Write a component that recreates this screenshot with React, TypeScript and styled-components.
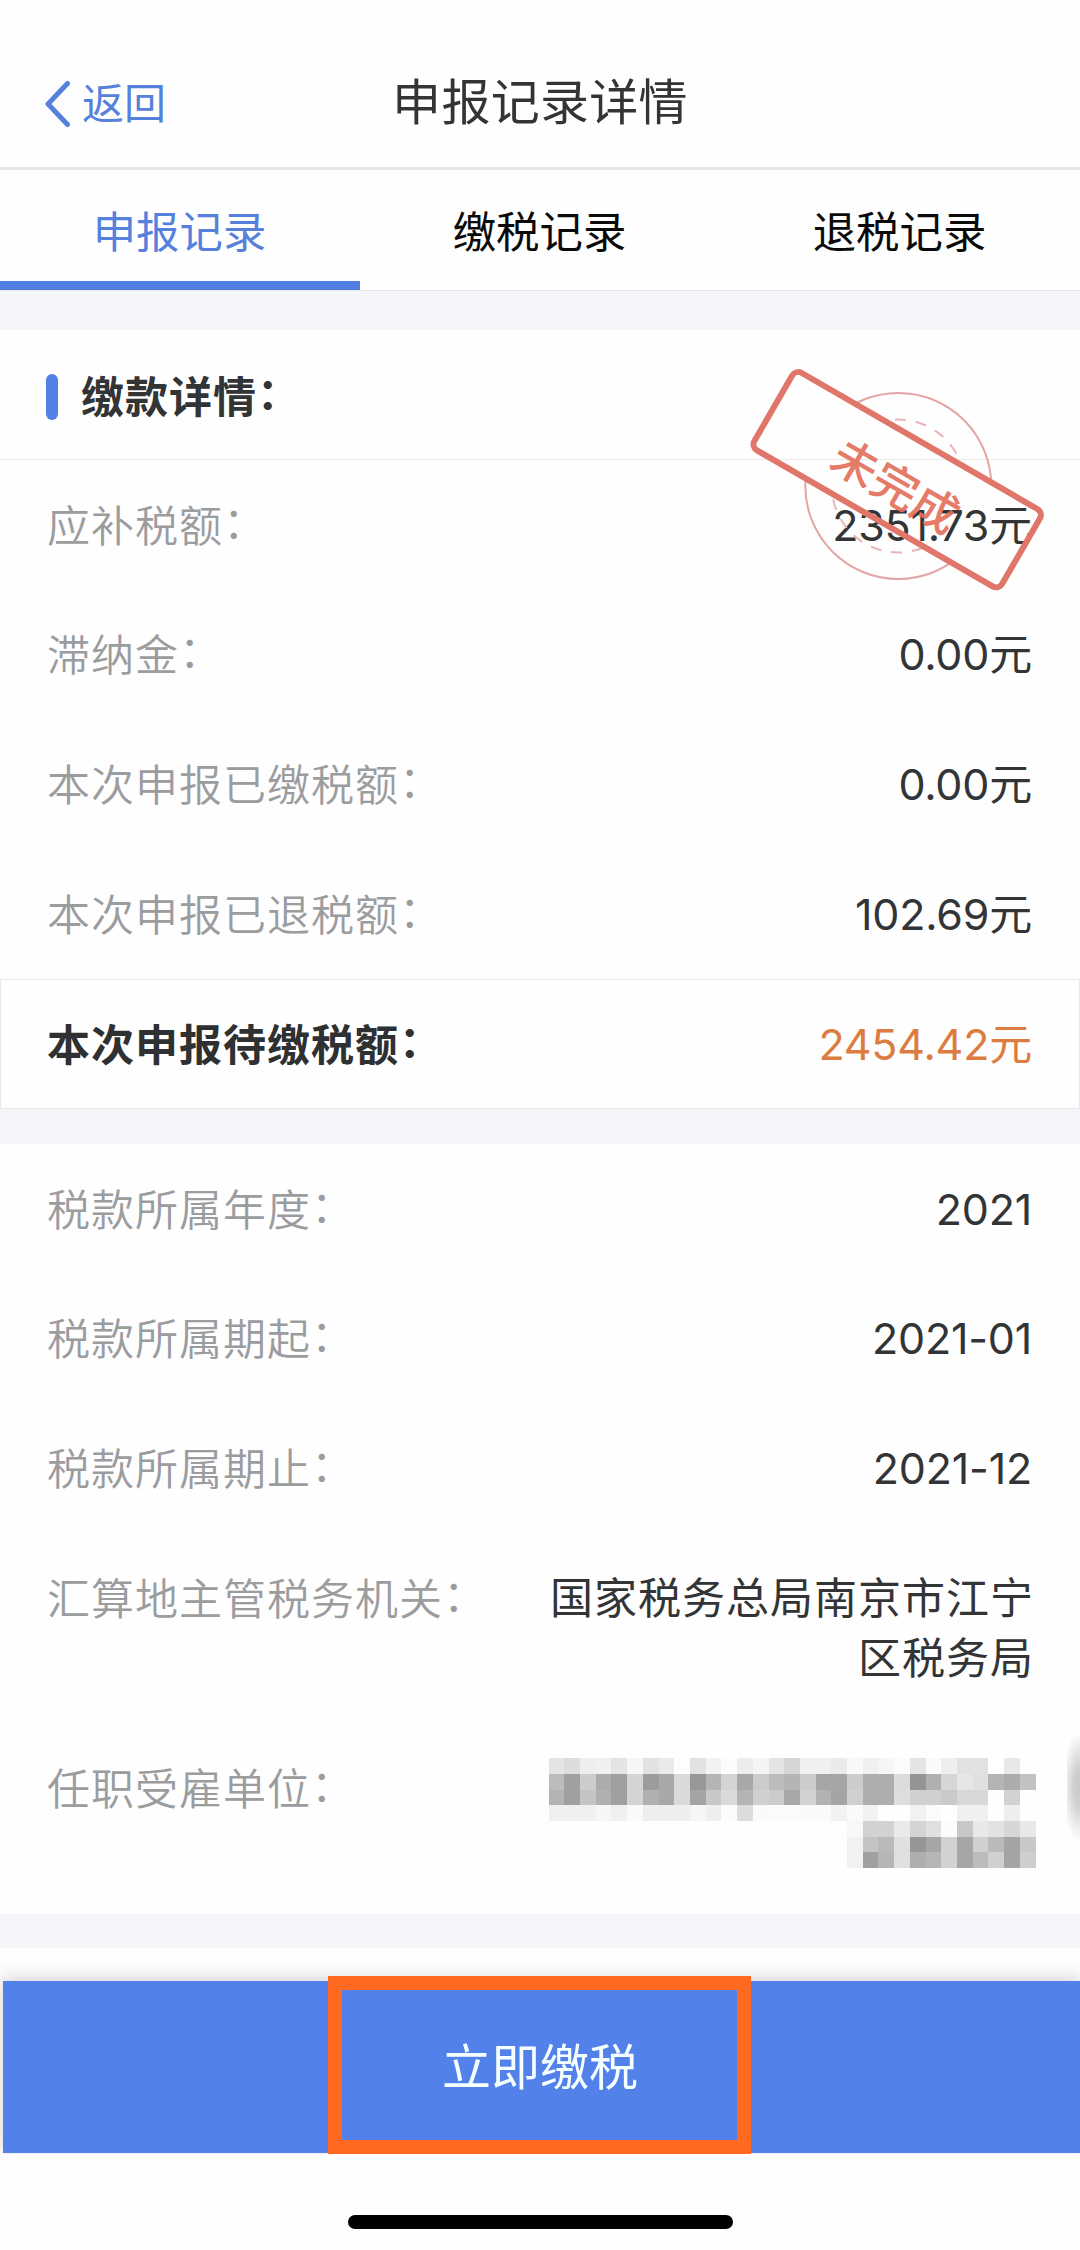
import React from "react";
import styled, { createGlobalStyle } from "styled-components";

const GlobalStyle = createGlobalStyle`
  * { box-sizing: border-box; }
  body {
    margin: 0;
    background: #fefefe;
    font-family: Inter, "Noto Sans CJK SC", sans-serif;
    color: #333435;
  }
`;

const Page = styled.div`
  position: relative;
  display: flex;
  flex-direction: column;
  width: 1080px;
  height: 2250px;
  overflow: hidden;
  background: #fefefe;
`;

const NavBar = styled.header`
  display: grid;
  grid-template-columns: 1fr auto 1fr;
  align-items: center;
  height: 170px;
  padding: 38px 44px 0;
  border-bottom: 3px solid #e6e6e6;
`;

const Back = styled.button`
  display: flex;
  align-items: center;
  gap: 12px;
  padding: 2px 0 0;
  border: 0;
  background: none;
  color: #5581dd;
  font: inherit;
  font-size: 42px;
  line-height: 60px;
`;

const Title = styled.h1`
  margin: 0;
  font-size: 49px;
  line-height: 60px;
  font-weight: 400;
  letter-spacing: 0.3px;
`;

const Tabs = styled.nav`
  display: grid;
  grid-template-columns: repeat(3, 1fr);
  height: 121px;
  border-bottom: 1px solid #e6e8ea;
`;

const Tab = styled.button<{ $active?: boolean }>`
  padding: 7px 1px 0 0;
  border: 0;
  border-bottom: 9px solid ${(p) => (p.$active ? "#517ee2" : "transparent")};
  background: none;
  color: ${(p) => (p.$active ? "#5581dd" : "#0b0b0b")};
  font: inherit;
  font-size: 43.4px;
`;

const Gap = styled.div<{ $h: number }>`
  flex: none;
  height: ${(p) => p.$h}px;
  background: #f4f6fa;
`;

const SectionHead = styled.div`
  display: flex;
  align-items: center;
  gap: 23px;
  height: 130px;
  padding: 4px 46px 0;
  border-bottom: 1px solid #e9e9e9;
`;

const Accent = styled.i`
  width: 12px;
  height: 46px;
  border-radius: 6px;
  background: #5380e6;
`;

const Heading = styled.h2`
  margin: 0;
  font-size: 43px;
  line-height: 60px;
  font-weight: 600;
  letter-spacing: 1px;
`;

const Row = styled.div<{ $total?: boolean }>`
  display: flex;
  justify-content: space-between;
  padding: ${(p) => (p.$total ? "33.6px 46px" : "34.6px 47px")};
  border: ${(p) => (p.$total ? "1px solid #e6e7e9" : "0")};
  font-size: 43px;
  line-height: 60.6px;
`;

const Label = styled.span<{ $strong?: boolean }>`
  flex: none;
  margin: 1px 0 -1px;
  color: ${(p) => (p.$strong ? "#2f3031" : "#9b9c9e")};
  font-weight: ${(p) => (p.$strong ? 600 : 350)};
  letter-spacing: 1px;
`;

const Colon = styled.span`
  font-family: "Noto Sans CJK TC", sans-serif;
  font-feature-settings: "halt";
  line-height: 0;
  vertical-align: 1px;
`;

const Value = styled.span<{ $accent?: boolean; $numeric: boolean }>`
  width: 491px;
  margin-right: ${(p) => (p.$numeric ? 1 : -1)}px;
  text-align: right;
  color: ${(p) => (p.$accent ? "#dc7c41" : "#333435")};
  letter-spacing: ${(p) => (p.$numeric ? -0.2 : 1)}px;
`;

const Mosaic = styled.div`
  display: grid;
  grid-template-columns: repeat(31, 1fr);
  grid-auto-rows: 15.7px;
  width: 487px;
  height: 121.2px;
  margin-right: -2.6px;
`;

const Cell = styled.i<{ $tone: string }>`
  background: #${(p) => p.$tone.repeat(3)};
`;

const EdgeShadow = styled.div`
  position: absolute;
  right: 0;
  top: 1735px;
  width: 13px;
  height: 112px;
  background: radial-gradient(ellipse 19px 56px at 100% 46%, #c9c9c9 0%, #d0d0d0 35%, #ebebeb 70%, rgba(254, 254, 254, 0) 100%);
`;

const Footer = styled.footer`
  display: flex;
  flex-direction: column;
  flex: 1;
  padding-top: 33px;
`;

const PayBar = styled.div`
  position: relative;
  display: flex;
  justify-content: center;
  height: 172px;
  margin-left: 3px;
  padding-right: 5px;
  background: #5381ea;
  box-shadow: 0 -3px 16px rgba(70, 50, 50, 0.22);
  clip-path: inset(-30px 0 -1px -3px);
`;

const PayButton = styled.button`
  width: 423px;
  height: 178px;
  margin-top: -5px;
  padding: 0 0 4px 2px;
  border: 14px solid #ff6a20;
  background: #5381ea;
  color: #f6ffff;
  font: inherit;
  font-size: 49px;
`;

const Outside = styled.div`
  display: flex;
  justify-content: center;
  margin-top: 62px;
`;

const HomeIndicator = styled.div`
  width: 385px;
  height: 14px;
  border-radius: 7px;
  background: #000;
`;

const StampArt = styled.svg`
  position: absolute;
  left: 720px;
  top: 340px;
`;

const MOSAIC_LINES = [
  "e4 dc ee f0 e4 f6 e2 ea fd e2 f2 fc ec f4 e4 d6 f0 f0 ea f8 f0 f6 fb e4 fa ee e2 e2 ff e8 fd",
  "bc a0 cc ac a0 d4 9c a8 da 98 b4 d4 a8 cc bc b4 cc a6 a6 cc ae ae dc 94 b0 d6 e6 e0 b4 ac c2",
  "b4 a0 c4 b0 a0 d4 b0 a8 da a4 c8 da b4 d0 cc a8 d2 b2 a4 d0 ae ae de d0 d0 ca d8 d8 fe d2 fe",
  "f0 f0 f0 f6 f0 fa ee ee ee f6 ee fc dc fa fc fc fa fa f2 fa f2 fe fe f2 fb fe f0 f0 fe ee fe",
  "fe fe fe fe fe fe fe fe fe fe fe fe fe fe fe fe fe fe fe f8 d2 d2 ea d4 e0 fc c8 e8 e2 d6 e8",
  "fe fe fe fe fe fe fe fe fe fe fe fe fe fe fe fe fe fe fe f2 c4 ba e0 96 a6 d2 a6 d0 ba a4 c8",
  "fe fe fe fe fe fe fe fe fe fe fe fe fe fe fe fe fe fe fe f2 a0 b6 e0 ae b6 d2 a6 bc d0 a4 ce",
];

const amounts = [
  ["应补税额", "2351.73元"],
  ["滞纳金", "0.00元"],
  ["本次申报已缴税额", "0.00元"],
  ["本次申报已退税额", "102.69元"],
];

const details = [
  ["税款所属年度", "2021"],
  ["税款所属期起", "2021-01"],
  ["税款所属期止", "2021-12"],
  ["汇算地主管税务机关", "国家税务总局南京市江宁区税务局"],
];

function Field({ label, value, total }: { label: string; value: React.ReactNode; total?: boolean }) {
  return (
    <Row $total={total}>
      <Label $strong={total}>
        {label}
        <Colon>：</Colon>
      </Label>
      {typeof value === "string" ? (
        <Value $accent={total} $numeric={/^\d/.test(value)}>
          {value}
        </Value>
      ) : (
        value
      )}
    </Row>
  );
}

function Stamp() {
  return (
    <StampArt width="360" height="270" viewBox="0 0 360 270" fill="none">
      <defs>
        <mask id="outside-plate">
          <rect width="360" height="270" fill="#fff" />
          <rect x="34.2" y="95" width="286" height="89.4" rx="8" fill="#000" transform="rotate(30 177.2 139.7)" />
        </mask>
      </defs>
      <g mask="url(#outside-plate)" stroke="#e3a5a6">
        <circle cx="178.3" cy="146" r="93" strokeWidth="2" />
        <circle cx="178.3" cy="146" r="66.5" stroke="#e8b5b6" strokeWidth="2" strokeDasharray="11 9.9" strokeDashoffset="4" />
      </g>
      <g transform="rotate(30 177.2 139.7)">
        <rect x="34.2" y="95" width="286" height="89.4" rx="7" stroke="#e07669" strokeWidth="6" />
        <text
          x="179"
          y="163"
          textAnchor="middle"
          fill="#e36f5a"
          fillOpacity="0.92"
          fontSize="46"
          fontWeight="500"
          fontFamily="'Noto Sans CJK SC', sans-serif"
        >
          未完成
        </text>
      </g>
    </StampArt>
  );
}

export default function App() {
  return (
    <>
      <GlobalStyle />
      <Page>
        <NavBar>
          <Back>
            <svg width="26" height="48" viewBox="0 0 26 48" fill="none">
              <path d="M23.5 3.5 L4 24 L23.5 44.5" stroke="#5581dd" strokeWidth="5" strokeLinecap="round" strokeLinejoin="round" />
            </svg>
            返回
          </Back>
          <Title>申报记录详情</Title>
        </NavBar>
        <Tabs>
          <Tab $active>申报记录</Tab>
          <Tab>缴税记录</Tab>
          <Tab>退税记录</Tab>
        </Tabs>
        <Gap $h={39} />
        <SectionHead>
          <Accent />
          <Heading>
            缴款详情<Colon>：</Colon>
          </Heading>
        </SectionHead>
        {amounts.map(([label, value]) => (
          <Field key={label} label={label} value={value} />
        ))}
        <Field label="本次申报待缴税额" value="2454.42元" total />
        <Gap $h={35} />
        {details.map(([label, value]) => (
          <Field key={label} label={label} value={value} />
        ))}
        <Field
          label="任职受雇单位"
          value={
            <Mosaic>
              {MOSAIC_LINES.flatMap((line, r) => line.split(" ").map((tone, c) => <Cell key={`${r}-${c}`} $tone={tone} />))}
            </Mosaic>
          }
        />
        <Gap $h={34} />
        <Footer>
          <PayBar>
            <PayButton>立即缴税</PayButton>
          </PayBar>
          <Outside>
            <HomeIndicator />
          </Outside>
        </Footer>
        <Stamp />
        <EdgeShadow />
      </Page>
    </>
  );
}
